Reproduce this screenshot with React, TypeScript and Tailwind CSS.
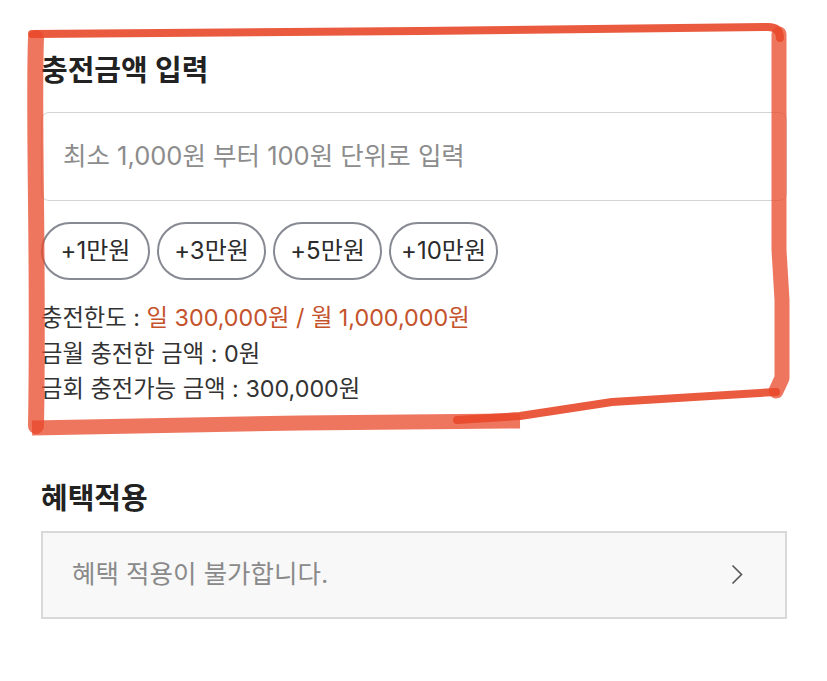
import type { ReactNode } from "react";

const amounts = ["+1만원", "+3만원", "+5만원", "+10만원"];

function SectionTitle({ children }: { children: ReactNode }) {
  return <h2 className="text-[29px] font-semibold leading-[40px] text-[#222]">{children}</h2>;
}

function AmountButton({ label }: { label: string }) {
  return (
    <button className="flex h-[58px] w-[109px] items-center justify-center rounded-full border-2 border-[#878993] text-[24px] text-[#2b2b2b]">
      {label}
    </button>
  );
}

function Annotation() {
  return (
    <svg className="pointer-events-none absolute left-0 top-0" width="827" height="681" viewBox="0 0 827 681">
      <g fill="none" stroke="#e8482a" strokeLinejoin="round">
        <path d="M36 38 C33 120 39 260 36 426" strokeWidth="16" strokeOpacity="0.75" strokeLinecap="round" />
        <path d="M32 34 L420 31 L768 27 Q780 27 780 38" strokeWidth="8" strokeOpacity="0.9" strokeLinecap="round" />
        <path d="M779 34 L779 250 L782 300 L782 378 L776 391" strokeWidth="15" strokeOpacity="0.75" strokeLinecap="round" />
        <path d="M776 392 L612 402 L520 416 L457 420" strokeWidth="8" strokeOpacity="0.9" strokeLinecap="round" />
        <path d="M520 421 L300 423 L32 428" strokeWidth="15" strokeOpacity="0.75" strokeLinecap="butt" />
      </g>
    </svg>
  );
}

export default function App() {
  return (
    <div className="relative h-[681px] w-[827px] overflow-hidden bg-white font-['Inter','Noto_Sans_CJK_KR',sans-serif]">
      <div className="pl-[41px] pr-[40px] pt-[51px]">
        <SectionTitle>충전금액 입력</SectionTitle>
        <div className="mt-[21px] flex h-[89px] items-center rounded-[8px] border border-[#d4d4d4] px-[21px] text-[25.5px] text-[#8c8c8c]">
          최소 1,000원 부터 100원 단위로 입력
        </div>
        <div className="mt-[21px] flex gap-[7px]">
          {amounts.map((a) => (
            <AmountButton key={a} label={a} />
          ))}
        </div>
        <div className="mt-[20px] text-[23.3px] leading-[35.5px] text-[#333]">
          <p>
            충전한도 : <span className="text-[#c4532c]">일 300,000원 / 월 1,000,000원</span>
          </p>
          <p>금월 충전한 금액 : 0원</p>
          <p>금회 충전가능 금액 : 300,000원</p>
        </div>

        <div className="mt-[72px]">
          <SectionTitle>혜택적용</SectionTitle>
        </div>
        <div className="mt-[12px] flex h-[88px] items-center justify-between border-2 border-[#d9d9d9] bg-[#f8f8f8] pl-[29px] pr-[42px]">
          <span className="text-[25.5px] text-[#8a8a8a]">혜택 적용이 불가합니다.</span>
          <svg width="12" height="21" viewBox="0 0 12 21">
            <polyline points="1.5,1.5 10.5,10.5 1.5,19.5" fill="none" stroke="#555" strokeWidth="1.6" />
          </svg>
        </div>
      </div>
      <Annotation />
    </div>
  );
}
